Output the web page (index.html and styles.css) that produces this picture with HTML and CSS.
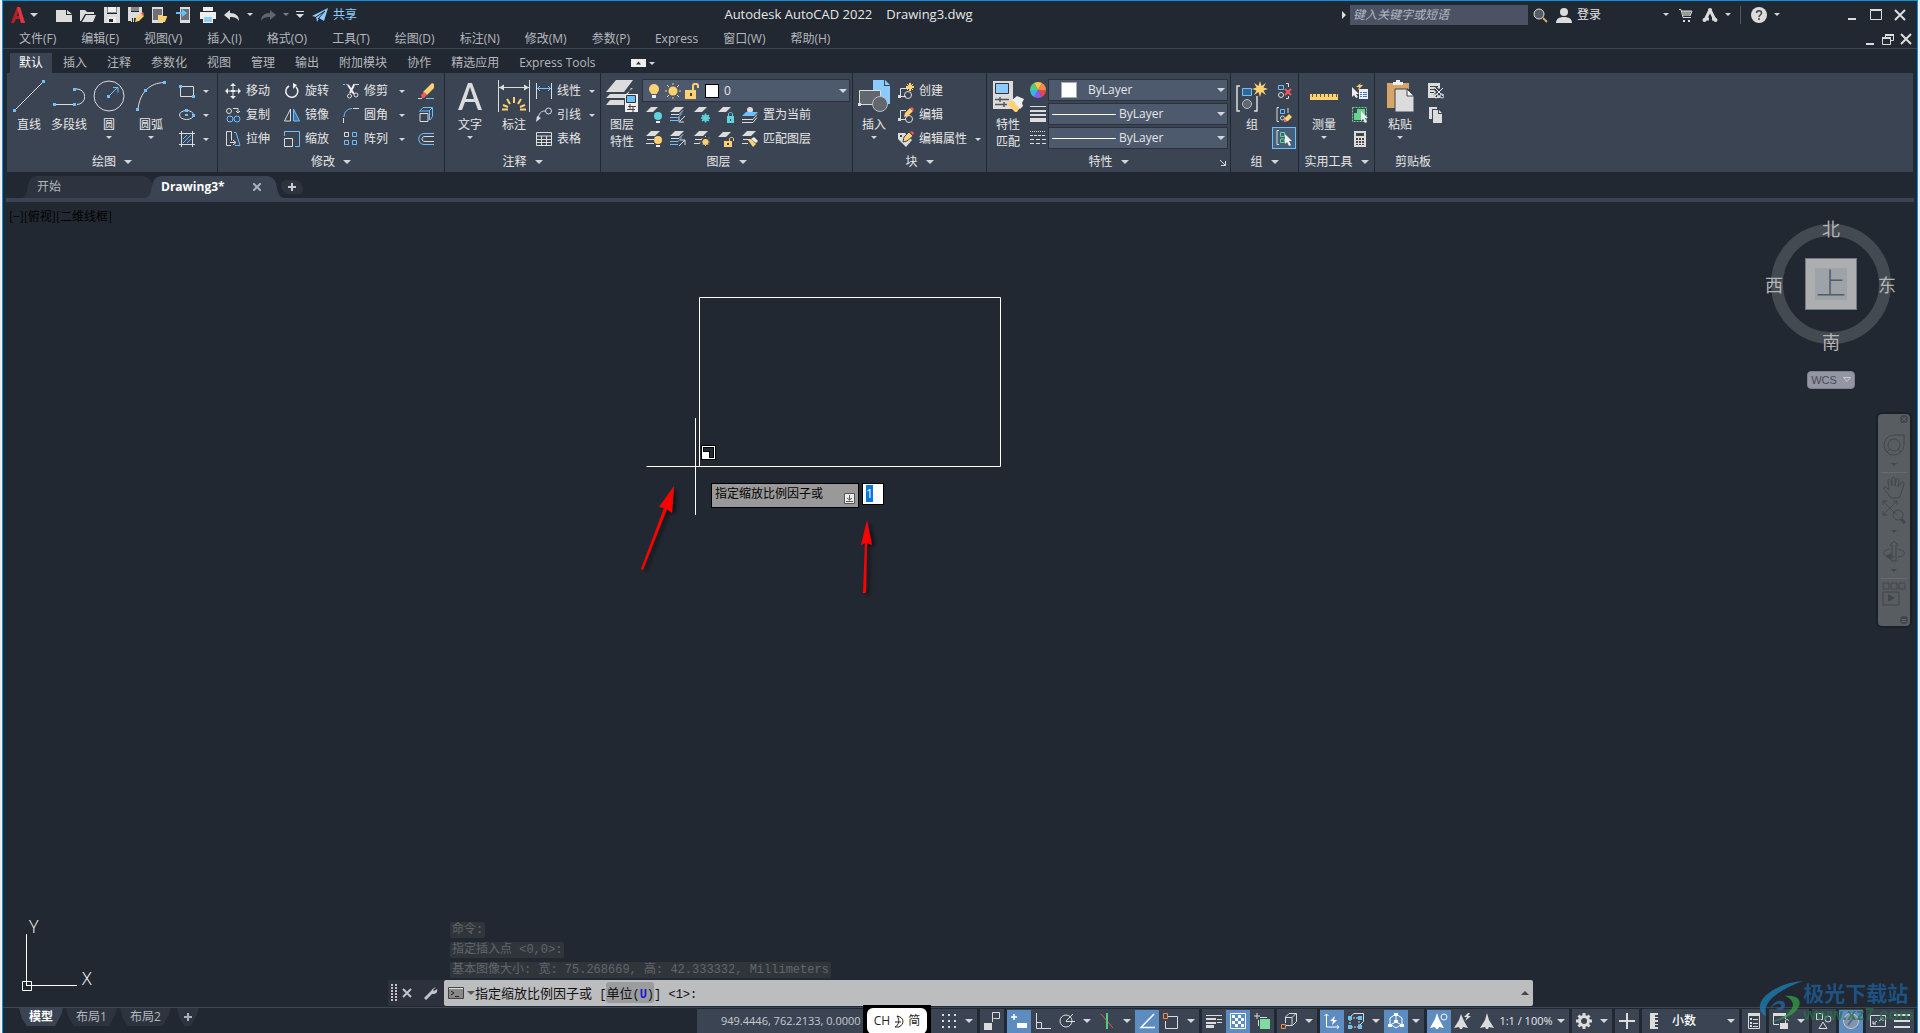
FILE: index.html
```html
<!DOCTYPE html>
<html lang="zh-CN">
<head>
<meta charset="utf-8">
<title>Autodesk AutoCAD 2022 - Drawing3.dwg</title>
<link rel="stylesheet" href="styles.css">
</head>
<body>
<div class="app">

<header class="titlebar">
  <div class="quick">
    <button class="cell" aria-label="应用程序菜单"><svg width="16" height="18" viewBox="0 0 16 18"><path d="M1 17 7 1h3l5 16h-4l-1-4H6l-2 4z" fill="#b3202a"/><path d="M7 1h3l5 16h-4L8 5z" fill="#e0363d"/><path d="M7 10h2l-1-4z" fill="#222831"/></svg></button>
    <i class="caret mid"></i>
    <span class="gap"></span>
    <button class="cell" aria-label="新建"><svg width="16" height="16"><path class="f" d="M0 3h10v5h6v7H0zM11 3l5 4h-5z"/></svg></button>
    <button class="cell" aria-label="打开"><svg width="16" height="16"><path class="f" d="M0 3h5l2 2h7v2H5L1 14H0zM6 8h10l-3 7H2z"/></svg></button>
    <button class="cell" aria-label="保存"><svg width="16" height="16"><path class="f" d="M0 0h3v7h10V0h3v16H0z"/><path fill="#888" d="M3 0h10v6H3z"/><path fill="#eee" d="M4 0h8v5H4zM4 10h8v6H4z"/><path fill="#222831" d="M5 12h4v3H5z"/></svg></button>
    <button class="cell" aria-label="另存为"><svg width="16" height="16"><path class="f" d="M0 0h3v5h8V0h3v7l-4 4H3v3H0z"/><path fill="#888" d="M3 0h8v4H3z"/><path class="s" d="M3.500 15v-4M5.500 15v-4"/><path d="m7 15 1-4 5-5 3 3-5 5z" fill="#ffd173"/><path d="m13 6 2-1 1 2-1 2z" fill="#f0565b"/></svg></button>
    <button class="cell" aria-label="从 Web 和 Mobile 打开"><svg width="16" height="16"><path fill="#dcdcdc" d="M0 0h11v16H0z"/><path fill="#6b6f76" d="M1 2h9v11H1z"/><path fill="#ffd173" d="M6 8h4l1 1h4v1l-2 5H6z"/></svg></button>
    <button class="cell" aria-label="保存到 Web 和 Mobile"><svg width="16" height="16"><path fill="#dcdcdc" d="M4 0h10v16H4z"/><path fill="#6b6f76" d="M5 2h8v11H5z"/><path fill="#6cc0ff" d="M0 5h6V2l5 4-5 4V7H0z"/></svg></button>
    <button class="cell" aria-label="打印"><svg width="16" height="16"><path fill="#eee" d="M3 0h10v4H3zM0 5h16v7h-3V9H3v3H0z"/><path fill="#eee" d="M3 9h10v7H3z"/><path fill="#8ccbff" d="M4 10h8v5H4z"/></svg></button>
    <button class="cell" aria-label="放弃"><svg width="16" height="16"><path class="f" d="M0 8l6-5v3c6 0 9 3 9 8-2-3-4-4-9-4v3z"/></svg></button>
    <i class="caret slot"></i>
    <button class="cell" aria-label="重做"><svg width="16" height="16"><path fill="#60656d" d="M16 8l-6-5v3c-6 0-9 3-9 8 2-3 4-4 9-4v3z"/></svg></button>
    <i class="caret slot dim"></i>
    <button class="cell thin" aria-label="自定义快速访问工具栏"><svg width="10" height="8"><path class="f" d="M1 0h8v1H1zM1 3h8L5 7z"/></svg></button>
    <button class="share"><svg width="16" height="14"><path fill="#8ccbff" d="M0 8 16 0l-4 13-5-3-2 4-1-5z"/><path stroke="#222831" fill="none" d="M4 9l9-6-7 8"/></svg>共享</button>
  </div>
  <h1 class="title"><span>Autodesk AutoCAD 2022</span><span>Drawing3.dwg</span></h1>
  <div class="account">
    <svg width="10" height="8"><path class="f" d="M2 0l4 4-4 4z"/></svg>
    <input class="search" type="text" placeholder="键入关键字或短语" aria-label="搜索">
    <button class="cell" aria-label="搜索"><svg width="16" height="16"><circle cx="7" cy="7" r="5" fill="#555c66" stroke="#dcdcdc"/><path d="m11 11 4 4" stroke="#d8a468" stroke-width="2"/></svg></button>
    <button class="login"><svg width="16" height="16"><circle class="f" cx="8" cy="5" r="4"/><path class="f" d="M0 16c0-4 3-6 8-6s8 2 8 6z"/></svg>登录<i class="caret"></i></button>
    <button class="cell" aria-label="商店"><svg width="14" height="14"><path fill="#999" d="M3 3h9l-1 5H4z"/><path class="s" d="M0 1.500h2l2 8h8M3 3h10l-2 5"/><path class="f" d="M4 12h2v2H4zM9 12h2v2H9z"/></svg></button>
    <button class="cell" aria-label="Autodesk App Store"><svg width="16" height="16"><path d="M8 3 3 13M8 3l5 10M3 12h4M10 12h4" stroke="#dcdcdc" stroke-width="3" fill="none"/><circle class="f" cx="8" cy="3" r="2"/><circle class="f" cx="2.500" cy="13" r="2"/><circle class="f" cx="13.500" cy="13" r="2"/></svg></button>
    <i class="caret slot"></i>
    <span class="vline"></span>
    <button class="cell" aria-label="帮助"><svg width="16" height="16"><circle class="f" cx="8" cy="8" r="8"/><path d="M5.500 6C5.500 3 10.500 3 10.500 6c0 2-2.500 2-2.500 4M8 11v2" stroke="#444" stroke-width="1.500" fill="none"/></svg></button>
    <i class="caret slot"></i>
    <div class="winbtns">
      <button class="cell" aria-label="最小化"><svg width="12" height="12"><path class="f" d="M2 9h8v2H2z"/></svg></button>
      <button class="cell" aria-label="最大化"><svg width="12" height="12"><path class="s" d="M.5 1.500h11v9H.5zM0 .5h12"/></svg></button>
      <button class="cell" aria-label="关闭"><svg width="12" height="12"><path d="m1 1 10 10M11 1 1 11" stroke="#dcdcdc" stroke-width="2"/></svg></button>
    </div>
  </div>
</header>

<nav class="menubar">
  <button>文件(F)</button><button>编辑(E)</button><button>视图(V)</button><button>插入(I)</button><button>格式(O)</button><button>工具(T)</button><button>绘图(D)</button><button>标注(N)</button><button>修改(M)</button><button>参数(P)</button><button>Express</button><button>窗口(W)</button><button>帮助(H)</button>
  <div class="docbtns">
    <button aria-label="最小化图形"><svg width="12" height="12"><path class="f" d="M2 10h8v2H2z"/></svg></button>
    <button aria-label="还原图形"><svg width="12" height="12"><path class="s" d="M3.500 4V1.500h8v6H9M.5 5h8v6.500h-8z"/><path class="f" d="M3 1h9v2H3zM0 4h9v2H0z"/></svg></button>
    <button aria-label="关闭图形"><svg width="12" height="12"><path d="m1 1 10 10M11 1 1 11" stroke="#dcdcdc" stroke-width="2"/></svg></button>
  </div>
</nav>

<nav class="tabs">
  <button class="on">默认</button><button>插入</button><button>注释</button><button>参数化</button><button>视图</button><button>管理</button><button>输出</button><button>附加模块</button><button>协作</button><button>精选应用</button><button>Express Tools</button>
  <button class="minribbon" aria-label="最小化功能区"><svg width="15" height="8"><path fill="#eee" d="M0 0h15v8H0z"/><path fill="#333" d="M5 5.500h5L7.500 2.500z"/></svg><i class="caret"></i></button>
</nav>

<section class="ribbon">
  <div class="panel p-draw">
    <div class="body">
      <button class="big"><svg width="32" height="32"><path class="s" d="M1 31 31 1"/><path class="bf" d="M0 29h3v3H0zM29 0h3v3h-3z"/></svg><span>直线</span></button>
      <button class="big"><svg width="32" height="32"><path class="s" d="M1 24.500h20M23 9h1a7.500 7.500 0 0 1 0 15.500"/><path class="bf" d="M0 23h3v3H0zM20 23h3v3h-3zM20 8h3v3h-3z"/></svg><span>多段线</span></button>
      <button class="big"><svg width="32" height="32"><circle class="s" cx="16" cy="16" r="15"/><path class="b" d="m16 16 8-8M20 7.500h5v5"/><path class="bf" d="M14 15h3v3h-3z"/></svg><span>圆</span><i class="caret"></i></button>
      <button class="big w44"><svg width="32" height="32"><path class="s" d="M3 29C5 12 15 3 29 2.500"/><path class="bf" d="M1 28h3v3H1zM9 9h3v3H9zM28 1h3v3h-3z"/></svg><span>圆弧</span><i class="caret"></i></button>
      <div class="col">
        <button class="small" aria-label="矩形"><svg width="16" height="16"><path class="s" d="M1.500 3.500h13v10h-13z"/><path class="bf" d="M0 2h3v3H0zM13 12h3v3h-3z"/></svg><i class="caret"></i></button>
        <button class="small" aria-label="椭圆"><svg width="16" height="16"><ellipse class="s" cx="7.500" cy="8" rx="7" ry="4.500"/><path class="bf" d="M6 2h3v3H6zM6 7h3v2H6zM13 7h3v3h-3z"/></svg><i class="caret"></i></button>
        <button class="small" aria-label="图案填充"><svg width="16" height="16"><path class="s" d="M2.500 0v16M13.500 0v16M0 2.500h16M0 13.500h16"/><path class="b" d="m4 8 4-4M4 12l8-8M8 12l4-4"/></svg><i class="caret"></i></button>
      </div>
    </div>
    <button class="name">绘图<i class="caret lg"></i></button>
  </div>

  <div class="panel p-modify">
    <div class="body">
      <div class="col">
        <button class="small"><svg width="16" height="16"><path stroke="#eee" stroke-width="1" fill="none" d="M8 2v12M2 8h12"/><path fill="#eee" d="m8 0 3 3H5zM8 16l3-3H5zM0 8l3-3v6zM16 8l-3-3v6zM6 7h4v2H6z"/></svg>移动</button>
        <button class="small"><svg width="16" height="16"><circle class="s" cx="4" cy="4" r="2.500"/><path class="s" d="M8 1.500h5V6M11 4l2 2 2-2"/><circle class="b" cx="5" cy="12" r="3"/><circle class="b" cx="12" cy="12" r="3"/></svg>复制</button>
        <button class="small"><svg width="16" height="16"><path class="s" d="M6 14.500H1.500V.5h5v9M5 11.500h5M8 9l3 2.500L8 14"/><path class="b" d="M9 1.500h2l4 13h-5"/></svg>拉伸</button>
      </div>
      <div class="col">
        <button class="small"><svg width="16" height="16"><path d="M5 3a6 6 0 1 0 7 1" fill="none" stroke="#eee" stroke-width="1.500"/><path fill="#eee" d="m9 0 4 2-4 4z"/></svg>旋转</button>
        <button class="small"><svg width="16" height="16"><path class="s" d="M6.500 2v12H.5z"/><path d="M9.500 2v12h6z" stroke="#6cc0ff" fill="#3b79a8"/></svg>镜像</button>
        <button class="small"><svg width="16" height="16"><path class="b" d="M.5 5V.5h15v15H11"/><path class="s" d="M.5 7.500h8v8h-8z"/></svg>缩放</button>
      </div>
      <div class="col wide">
        <button class="small"><svg width="16" height="16"><path class="b" stroke-dasharray="2 1" d="M0 1.500h5"/><path class="s" d="M10 1.500h6"/><path stroke="#eee" stroke-width="2" d="m5 2 6 9M11 2 7 10"/><circle class="s" cx="6.500" cy="13" r="2"/><circle class="s" cx="13" cy="12" r="2"/></svg>修剪<i class="caret"></i></button>
        <button class="small"><svg width="16" height="16"><path class="b" d="M1 10c0-5 3-8 8-8.500"/><path class="s" d="M.5 11v5M10 1.500h6"/></svg>圆角<i class="caret"></i></button>
        <button class="small"><svg width="16" height="16"><path class="s" d="M1.500 1.500h4v4h-4z"/><path class="b" d="M9.500 1.500h4v4h-4zM1.500 9.500h4v4h-4zM9.500 9.500h4v4h-4z"/></svg>阵列<i class="caret"></i></button>
      </div>
      <div class="col last">
        <button class="small" aria-label="删除"><svg width="16" height="16"><path d="m5 9 9-9 2 1v4l-7 7z" fill="#ffd173"/><path d="m3 12 3-3 3 3-3 3H4z" fill="#f0565b"/><path class="s" d="M0 15.500h4"/><path class="b" d="M8 15.500h8"/></svg></button>
        <button class="small" aria-label="分解"><svg width="16" height="16"><path class="s" d="M2 6.500h8v8H2z"/><path class="b" d="M1.500 4.500 5 .5h9.500v9L12 13M1.500 4h9.500l3.500-3.500M11.500 4v9"/></svg></button>
        <button class="small" aria-label="偏移"><svg width="16" height="16"><path class="b" d="M16 2.500H6c-7 0-7 11 0 11h10"/><path class="s" d="M16 5.500H7c-4 0-4 5 0 5h9"/></svg></button>
      </div>
    </div>
    <button class="name">修改<i class="caret lg"></i></button>
  </div>

  <div class="panel p-anno">
    <div class="body">
      <button class="big w48"><svg width="32" height="32"><path class="f" fill-rule="evenodd" d="M4 30 14 3h4l10 27h-4l-3-8H11l-3 8zM12 19h8L16 7z"/></svg><span>文字</span><i class="caret"></i></button>
      <button class="big"><svg width="32" height="32"><path class="s" d="M.5 0v32M31.500 0v32M1 7.500h30"/><path class="f" d="m1 7.500 5-3v6zM31 7.500l-5-3v6z"/><path d="M16 17v6M9 19l3 5M23 19l-3 5M5 25l5 2M27 25l-5 2M4 29.500h6M22 29.500h6" stroke="#ffd173" stroke-width="2"/></svg><span>标注</span></button>
      <div class="col tight">
        <button class="small"><svg width="16" height="16"><path class="s" d="M.5 0v16M15.500 0v16"/><path class="b" d="M1 5.500h14M4 3 1.500 5.500 4 8M12 3l2.500 2.500L12 8"/></svg>线性<i class="caret"></i></button>
        <button class="small"><svg width="16" height="16"><path class="s" d="M2 12C3 6 5 4 9 4"/><circle class="s" cx="12.500" cy="4" r="3"/><path class="f" d="m0 15 1-6 4 2z"/></svg>引线<i class="caret"></i></button>
        <button class="small"><svg width="16" height="16"><path class="s" d="M.5 1.500h15v13H.5zM0 5h16M1 8.500h15M1 11.500h15M5.500 5v10M10.500 5v10"/></svg>表格</button>
      </div>
    </div>
    <button class="name">注释<i class="caret lg"></i></button>
  </div>

  <div class="panel p-layer">
    <div class="body">
      <button class="big"><svg width="32" height="32"><path class="f" d="M0 12 10 0h17l-9 12zM0 18l4-4h16l7-6h-2l-5 10zM0 25l4-5h14v5z"/><path fill="#eee" d="M19 14h13v18H19z"/><path fill="#6cc0ff" stroke="#333" d="M20.500 15.500h9v7h-9z"/><path stroke="#444" d="M22 26.500h8M21 29.500h8M24 24v5M27 27v5"/></svg><span>图层<br>特性</span></button>
      <div class="stack">
        <div class="combo"><svg width="16" height="16"><circle cx="8" cy="6" r="5" fill="#ffd173"/><path fill="#ffd173" d="M5 9h6v2H5z"/><path fill="#eee" d="M6 12h4v3H6z"/></svg><svg width="16" height="16"><circle cx="8" cy="8" r="4.500" fill="#ffd173"/><path stroke="#ffd173" d="M8 0v2M8 14v2M0 8h2M14 8h2M2 2l2 2M12 12l2 2M14 2l-2 2M4 12l-2 2"/></svg><svg width="16" height="16"><path fill="#ffd173" d="M1 7h11v9H1z"/><path d="M9 7V3c0-3 5-3 5 0v2" fill="none" stroke="#ffd173" stroke-width="2"/><path fill="#444" d="M6 10h2v3H6z"/></svg><b class="swatch black"></b><select aria-label="图层"><option>0</option></select><i class="caret lg"></i></div>
        <div class="row">
          <button class="cell" aria-label="关"><svg width="16" height="16"><path class="f" d="m0 5 5-5h7L7 5z"/><circle cx="12" cy="9" r="4" fill="#60d4de"/><path fill="#eee" d="M10 14h4v2h-4z"/></svg></button>
          <button class="cell" aria-label="隔离"><svg width="16" height="16"><path class="f" d="m0 5 5-5h9L9 5z"/><path class="s" d="M1 7.500h8l4-4"/><path class="b" d="M0 10.500h8l4-4M0 13.500h8"/><path class="s" d="m15 9-5 5M9 10v5h5"/></svg></button>
          <button class="cell" aria-label="冻结"><svg width="16" height="16"><path class="f" d="m0 5 5-5h8L8 5z"/><path stroke="#60d4de" stroke-width="1.500" d="M11.500 6.500v9M7 11h9M8 8l7 6M15 8l-7 6"/><circle cx="11.500" cy="11" r="3" fill="none" stroke="#60d4de"/></svg></button>
          <button class="cell" aria-label="锁定"><svg width="16" height="16"><path class="f" d="m0 5 5-5h8L8 5z"/><path fill="#60d4de" d="M9 9h7v7H9z"/><path d="M10.500 9V7c0-2 4-2 4 0v2" fill="none" stroke="#60d4de"/><path fill="#333" d="M12 12h1v2h-1z"/></svg></button>
          <button class="small flush"><svg width="16" height="16"><circle class="f" cx="8" cy="3" r="3"/><path fill="#6cc0ff" d="m0 9 4-4h12l-4 4z"/><path class="s" d="M0 12.500h11l4-5M0 15.500h11l4-5"/></svg>置为当前</button>
        </div>
        <div class="row">
          <button class="cell" aria-label="全部打开"><svg width="16" height="16"><path class="f" d="m0 5 5-5h9L9 5z"/><path class="s" d="M1 8.500h7M0 12.500h8"/><circle cx="12" cy="9" r="4" fill="#ffd173"/><path fill="#eee" d="M10 14h4v2h-4z"/></svg></button>
          <button class="cell" aria-label="取消隔离"><svg width="16" height="16"><path class="f" d="m0 5 5-5h9L9 5z"/><path class="s" d="M1 7.500h8l4-4"/><path class="b" d="M0 10.500h8l4-4M0 13.500h8"/><path class="s" d="m9 15 6-6M10 9h5v5"/></svg></button>
          <button class="cell" aria-label="解冻"><svg width="16" height="16"><path class="f" d="m0 5 5-5h9L9 5z"/><path class="s" d="M1 8.500h7M0 12.500h6"/><circle cx="11.500" cy="11" r="3" fill="#ffd173"/><path stroke="#ffd173" stroke-dasharray="1 2" d="M11.500 5v12M5.500 11h12M7.500 7l8 8M15.500 7l-8 8"/></svg></button>
          <button class="cell" aria-label="解锁"><svg width="16" height="16"><path class="f" d="m0 6 5-5h8L8 6z"/><path fill="#ffd173" d="M6 10h8v6H6z"/><path d="M11.500 10V8c0-2 4-2 4 0v2" fill="none" stroke="#ffd173"/><path fill="#444" d="M9 12h2v2H9z"/></svg></button>
          <button class="small flush"><svg width="16" height="16"><path class="f" d="m0 5 5-5h9L9 5z"/><path class="s" d="M1 8.500h7M0 12.500h6"/><path fill="#ffd173" d="m6 9 3-1 5 5-3 3z"/><path fill="#eee" d="m9 8 3-2 4 4-2 2z"/></svg>匹配图层</button>
        </div>
      </div>
    </div>
    <button class="name">图层<i class="caret lg"></i></button>
  </div>

  <div class="panel p-block">
    <div class="body">
      <button class="big"><svg width="32" height="32"><path fill="#8ccbff" d="M15 0h11v6h6v18H15z"/><path fill="#8ccbff" d="m27 0 5 5h-5z"/><path d="M1.500 10.500h21v14h-21z" fill="#62666e" stroke="#dcdcdc"/><circle cx="22" cy="24" r="7.500" fill="#62666e" stroke="#b9bcc0"/><path class="f" d="M0 23h3v3H0z"/></svg><span>插入</span><i class="caret"></i></button>
      <div class="col pad4">
        <button class="small"><svg width="16" height="16"><path class="s" d="M10 5.500H2.500v8H8"/><circle class="s" cx="10" cy="12" r="3.500"/><path class="f" d="M0 12h3v3H0z"/><path stroke="#ffd173" stroke-width="2" d="M12 0v8M8 4h8"/><path stroke="#ffd173" d="M9 1l6 6M15 1 9 7"/></svg>创建</button>
        <button class="small"><svg width="16" height="16"><path class="s" d="M8 3.500H2.500v9H8"/><circle class="s" cx="11" cy="12" r="3.500"/><path class="f" d="M0 11h3v3H0z"/><path d="m6 10 1-4 5-5 3 3-5 5z" fill="#ffd173"/><path d="m12 1 2-1 2 2-1 2z" fill="#f0565b"/></svg>编辑</button>
        <button class="small"><svg width="16" height="16"><path class="f" d="M0 2h7l7 7-6 7-8-8z"/><path fill="#3b4453" d="M2 4h2v2H2z"/><path d="m5 11 1-5 5-5 4 4-6 5z" fill="#ffd173" stroke="#3b4453"/><path d="m12 1 2-1 2 2-1 2z" fill="#f0565b"/></svg>编辑属性<i class="caret"></i></button>
      </div>
    </div>
    <button class="name">块<i class="caret lg"></i></button>
  </div>

  <div class="panel p-prop">
    <div class="body">
      <button class="big"><svg width="32" height="32"><path class="f" d="M1 1h20v28H1z"/><path fill="#8ccbff" stroke="#333" stroke-width="1" d="M3.500 3.500h13v10h-13z"/><path stroke="#555" d="M3 19.500h14M3 24.500h12M8 17v5M12 22v5" stroke-width="1.500"/><path fill="#ffd173" d="m15 24 5-4 8 8-4 5z"/><path fill="#eee" d="m20 20 5-4 7 3-2 4 1 3-3 3z"/></svg><span>特性<br>匹配</span></button>
      <div class="stack">
        <div class="row"><svg class="pico wheel" width="16" height="16" viewBox="-8 -8 16 16"><path fill="#ffc24a" d="M0 0-7-12H7z"/><path fill="#f58b4c" d="M0 0 7-12 14 0z"/><path fill="#e5484d" d="M0 0h14L7 12z"/><path fill="#8a5cf0" d="M0 0 7 12H-7z"/><path fill="#3fb2e8" d="M0 0-7 12-14 0z"/><path fill="#4fce7e" d="M0 0h-14L-7-12z"/></svg>
          <div class="combo"><b class="swatch white"></b><select class="c1" aria-label="对象颜色"><option>ByLayer</option></select><i class="caret lg"></i></div></div>
        <div class="row"><svg class="pico" width="16" height="16"><path class="f" d="M0 0h16v1H0zM0 4h16v2H0zM0 8h16v2H0zM0 12h16v4H0z"/></svg>
          <div class="combo"><span class="line"></span><select aria-label="线宽"><option>ByLayer</option></select><i class="caret lg"></i></div></div>
        <div class="row"><svg class="pico" width="16" height="16"><path class="s" stroke-dasharray="1 1" d="M0 1.500h16"/><path class="s" stroke-dasharray="3 1" d="M0 5.500h16"/><path class="s" stroke-dasharray="4 2" d="M0 9.500h16M0 13.500h16"/></svg>
          <div class="combo"><span class="line"></span><select aria-label="线型"><option>ByLayer</option></select><i class="caret lg"></i></div></div>
      </div>
    </div>
    <button class="name">特性<i class="caret lg"></i><svg class="launch" width="6" height="6"><path class="s" d="m0 0 5 5M5.500 1v4.500H1"/></svg></button>
  </div>

  <div class="panel p-group">
    <div class="body">
      <button class="big"><svg width="32" height="32"><path class="s" stroke-width="1.500" d="M4 6H1v25h3M18 31h3V16"/><path fill="#34678f" stroke="#6cc0ff" d="M6.500 8.500h9v7h-9z"/><circle cx="11" cy="24" r="4.500" fill="#62666e" stroke="#b9bcc0"/><path fill="#ffd173" d="m24 1 1.500 5L30 3l-2.500 4.500L32 9l-4.500 1.500L30 15l-4.500-3L24 17l-1.500-5L18 15l2.500-4.500L16 9l4.500-1.500L18 3l4.500 3z"/></svg><span>组</span></button>
      <div class="col cells">
        <button class="cell" aria-label="解除编组"><svg width="16" height="16"><path class="b" d="M2.500 2.500h5v4h-5z"/><circle class="s" cx="5" cy="12" r="2.500"/><path class="s" d="M10 .5h2.500V4M10 15.500h2.500V13"/><path stroke="#f0565b" stroke-width="2" d="m9 6 6 6M15 6l-6 6"/></svg></button>
        <button class="cell" aria-label="组编辑"><svg width="16" height="16"><path class="s" d="M3 .5H1v14h2M12 1v5"/><path class="b" d="M4.500 2.500h4v4h-4z"/><circle class="s" cx="6.500" cy="11" r="2"/><path d="m8 15 1-4 4-4 3 3-4 4z" fill="#ffd173"/><path fill="#f0565b" d="m8 15 1-3 2 2z"/></svg></button>
        <button class="cell boxed" aria-label="组选择"><svg width="16" height="16"><path class="s" d="M3 .5H1v14h2"/><path stroke="#68d391" fill="none" d="M4.500 2.500h4v4h-4zM4.500 9h4v3.500h-4z"/><path fill="#eee" d="M9 4v10l2-2 2 4 2-1-2-4h3z"/></svg></button>
      </div>
    </div>
    <button class="name">组<i class="caret lg"></i></button>
  </div>

  <div class="panel p-util">
    <div class="body">
      <button class="big w48"><svg width="32" height="32"><path fill="#ffd173" d="M2 14h28v6H2z"/><path stroke="#6a5a38" stroke-dasharray="1 3" stroke-width="3" d="M4 15.500h26"/></svg><span>测量</span><i class="caret"></i></button>
      <div class="col cells">
        <button class="cell" aria-label="快速选择"><svg width="16" height="16"><path fill="#eee" d="M0 4v10l2-2 2 3 2-1-2-3h3zM7 6h9v10H7z"/><path fill="#ffd173" d="M9 0 4 4h3l-1 3 5-5H8z"/><path stroke="#3b79c8" d="M8 9.500h2M11 9.500h4M8 11.500h2M11 11.500h4M8 13.500h2M11 13.500h4"/></svg></button>
        <button class="cell" aria-label="全部选择"><svg width="16" height="16"><path stroke="#68d391" stroke-dasharray="2 1" fill="none" d="M.5.5h14v14H.5z"/><path fill="#68d391" d="M5 2h8v8H5zM2 6h8v7H2z"/><path fill="#eee" d="M9 4v10l2-2 2 4 2-1-2-4h3z"/></svg></button>
        <button class="cell" aria-label="快速计算器"><svg width="16" height="16"><path class="f" d="M2 0h12v16H2z"/><path fill="#444" d="M4 2h8v3H4zM4 7h2v2H4zM7 7h2v2H7zM10 7h2v2h-2zM4 10h2v2H4zM7 10h2v2H7zM10 10h2v2h-2zM4 13h2v1H4zM7 13h2v1H7zM10 13h2v1h-2z"/></svg></button>
      </div>
    </div>
    <button class="name">实用工具<i class="caret lg"></i></button>
  </div>

  <div class="panel p-clip">
    <div class="body">
      <button class="big w48"><svg width="32" height="32"><path fill="#d8a468" d="M3 3h22v25H3z"/><path fill="#eee" d="M9 2h3V0h4v2h3v3H9z"/><path class="f" stroke="#3b4453" d="M11 9h13l6 6v17H11z"/><path fill="#f5f5f5" stroke="#3b4453" d="M23 9v7h7z"/></svg><span>粘贴</span><i class="caret"></i></button>
      <div class="col cells">
        <button class="cell" aria-label="剪切"><svg width="16" height="16"><path class="f" d="M0 0h12v15H0z"/><path stroke="#444" d="M2 3.500h8M2 6.500h5M2 9.500h4"/><path stroke="#3b4453" stroke-width="4" d="m7 5 8 8M15 5l-8 8"/><path stroke="#eee" d="m7 5 8 8M15 5l-8 8"/><circle class="s" cx="8" cy="13" r="2"/><circle class="s" cx="14" cy="13" r="2"/></svg></button>
        <button class="cell" aria-label="复制剪裁"><svg width="16" height="16"><path class="f" d="M1 0h8v2H4v10H1zM5 3h5v4h4v9H5zM11 3l3 3h-3z"/></svg></button>
      </div>
    </div>
    <span class="name">剪贴板</span>
  </div>
</section>

<nav class="doctabs">
  <button class="doctab">开始</button>
  <button class="doctab on"><span>Drawing3*</span><svg width="8" height="8"><path d="m0 0 8 8M8 0 0 8" stroke="#aab0b8" stroke-width="2"/></svg></button>
  <button class="newtab" aria-label="新建图形"><svg width="8" height="8"><path d="M4 0v8M0 4h8" stroke="#c8ccd2" stroke-width="2"/></svg></button>
</nav>

<main class="canvas">
  <p class="viewlabel">[−][俯视][二维线框]</p>

  <svg class="drawing" width="1010" height="410">
    <defs><filter id="shade" x="-50%" y="-20%" width="200%" height="140%"><feDropShadow dx="3" dy="2" stdDeviation="2" flood-color="#000" flood-opacity=".6"/></filter></defs>
    <path d="M693.500 95.500h301v169h-354M693.500 95.500v169M689.500 216v97" stroke="#fff" fill="none"/>
    <path d="M695 243h15v15h-15z" fill="#000"/><path d="M696 244h13v13h-13z" fill="#fff"/><path d="M697 245h11v11h-5v-6h-6z" fill="#000"/><path d="M698 246h9v9h-3v-6h-6z" fill="#222831"/>
    <g filter="url(#shade)" fill="#f00"><path d="m668 284-15 21 5 1-23 61 2 1 24-61 5 4zM861 318l-6 25 4-2-2 50h3l1-50 5 2z"/></g>
  </svg>

  <div class="prompt">
    <label class="promptlabel" for="factor">指定缩放比例因子或<svg width="11" height="11"><path fill="#eee" stroke="#555" d="M.5.500h10v10H.5z"/><path stroke="#555" fill="none" d="M5.500 2v5M3 5l2.500 2L8 5M2 8.500h7"/></svg></label>
    <span class="factorbox"><input id="factor" type="text" value="1"></span>
  </div>

  <div class="viewcube">
    <svg width="122" height="122"><circle cx="61" cy="61" r="54" fill="none" stroke="#444a52" stroke-width="12"/></svg>
    <span class="n">北</span><span class="w">西</span><span class="e">东</span><span class="so">南</span>
    <button class="face"><span>上</span></button>
  </div>
  <button class="wcs">WCS<svg width="8" height="6"><path d="M.5.500h7L4 4.500z" fill="none" stroke="#c8cad4"/></svg></button>

  <div class="navbar">
    <button aria-label="关闭导航栏" class="tiny"><svg width="8" height="8"><circle cx="4" cy="4" r="4" fill="#42474d"/><path d="m2 2 4 4M6 2 2 6" stroke="#5e6367"/></svg></button>
    <button aria-label="导航控制盘" class="nv"><svg width="22" height="22"><path class="n1" d="M11 1h10v10A10 10 0 1 1 11 1z"/><circle class="n1" cx="11" cy="11" r="6"/><path class="n1" d="m7 15-3 3M15 15l3 3"/></svg></button><i class="caret"></i><hr>
    <button aria-label="平移" class="nv"><svg width="22" height="22"><path class="n1" d="M8 21C5 17 3 14 1 12c-1-2 1-3 3-1l2 2L5 4c0-2 2-2 3 0l1 5V2c0-2 3-2 3 0v7l1-6c0-2 3-2 3 0l-1 7 3-4c1-2 3-1 3 1-1 4-2 6-3 9l-2 5z"/></svg></button>
    <button aria-label="范围缩放" class="nv"><svg width="24" height="24"><path class="n1" d="m1 1 14 14M15 1 1 15M1 5V1h4M11 1h4v4M1 11v4h4"/><circle class="n1" cx="16" cy="15" r="5" fill="#585d61"/><path d="m19 19 4 4" stroke="#42474d" stroke-width="3"/></svg></button><i class="caret"></i>
    <button aria-label="动态观察" class="nv"><svg width="22" height="22"><path class="n1" d="M9 21V5H7l4-4 4 4h-2v16z"/><path class="n1" d="M7 9C-2 11-2 15 6 16l5 1M15 9c9 2 8 7 0 8"/><path fill="#42474d" d="m3 17 5-4v7z"/></svg></button><i class="caret"></i><hr>
    <button aria-label="ShowMotion" class="nv"><svg width="24" height="24"><path class="n1" d="M1 1h6v6H1zM9 1h6v6H9zM17 1h6v6h-6zM1 10h16v13H1z"/><path fill="#42474d" d="m6 12 7 4-7 4z"/></svg></button>
    <button aria-label="自定义" class="tiny end"><svg width="8" height="8"><circle cx="4" cy="4" r="4" fill="#42474d"/><path d="M2 3.500h4M2 5.500h4" stroke="#5e6367"/></svg></button>
  </div>

  <svg class="ucs" width="90" height="90"><path d="M10.500 28v52M10 79.500h51M6.500 75.500h9v9h-9z" stroke="#fff" fill="none"/><text x="13" y="27">Y</text><text x="66" y="79">X</text></svg>

  <div class="command">
    <ul class="history"><li>命令:</li><li>指定插入点 &lt;0,0&gt;:</li><li>基本图像大小: 宽: 75.268669, 高: 42.333332, Millimeters</li></ul>
    <div class="cmdbar">
      <div class="grip">
        <svg width="6" height="18"><path stroke="#c0c3c8" stroke-width="2" stroke-dasharray="2 1" d="M1 0v18M5 0v18"/></svg>
        <button aria-label="关闭命令行"><svg width="10" height="10"><path d="m1 1 8 8M9 1 1 9" stroke="#c0c3c8" stroke-width="2"/></svg></button>
        <button aria-label="自定义命令行"><svg width="14" height="14"><path d="m1 13 7-7" stroke="#c0c3c8" stroke-width="3"/><path d="M12 1 9 4l1 1 3-2c1 3-1 5-4 5S6 3 12 1z" fill="#c0c3c8"/></svg></button>
      </div>
      <div class="cmdline">
        <svg width="16" height="12"><path fill="#888" stroke="#444" d="M.5.500h15v11H.5z"/><path fill="#ddd" d="M1 1h14v1H1z"/><path stroke="#222" fill="none" d="m3 4 3 2-3 2M7 9.500h4"/></svg><i class="caret lg dark"></i>
        <p>指定缩放比例因子或<code> [</code><mark>单位<code>(<b>U</b>)</code></mark><code>] &lt;1&gt;:</code></p>
        <button aria-label="展开历史记录"><svg width="8" height="4"><path fill="#444" d="M0 4h8L4 0z"/></svg></button>
      </div>
    </div>
  </div>
</main>

<footer class="bottom">
  <nav class="layouts">
    <button class="on">模型</button><button>布局1</button><button>布局2</button><button class="add" aria-label="新建布局"><svg width="8" height="8"><path d="M4 0v8M0 4h8" stroke="#aab0b8" stroke-width="2"/></svg></button>
  </nav>
  <div class="status">
    <div class="grp"><div class="coords"><span>949.4446, 762.2133, 0.0000</span><div class="ime"><span>CH <svg width="10" height="13"><path d="M3 1c7 1 8 8 2 11H1c4-2 5-7 2-11zM1 7h6" fill="none" stroke="#222"/></svg> 简</span></div></div>
      <button class="st" aria-label="栅格"><svg width="14" height="14"><path stroke="#dcdcdc" stroke-width="2" stroke-dasharray="2 4" d="M0 1h14M0 7h14M0 13h14"/></svg></button><button class="dd" aria-label="捕捉设置"><i class="caret lg"></i></button></div>
    <div class="grp"><button class="st" aria-label="推断约束"><svg width="16" height="18"><path class="s" d="M8.500 10V.5h7v6h-6"/><path class="f" d="M0 11h8v7H0z"/></svg></button></div>
    <div class="grp">
      <button class="st on" aria-label="动态输入"><svg width="16" height="16"><path stroke="#fff" stroke-width="1.500" d="M3 1v6M0 4h6"/><path fill="#fff" d="M6 10h10v5H6z"/></svg></button>
      <button class="st" aria-label="正交"><svg width="16" height="16"><path class="s" d="M1.500 0v15.500H16M1.500 9.500h5v6"/></svg></button>
      <button class="st" aria-label="极轴追踪"><svg width="16" height="16"><circle class="s" cx="7" cy="8" r="6"/><path class="s" d="m7 8 7-7M7 8.500h9"/></svg></button><button class="dd" aria-label="极轴设置"><i class="caret lg"></i></button>
      <button class="st" aria-label="等轴测草图"><svg width="16" height="16"><path stroke="#f0565b" d="m2 1 12 14"/><path stroke="#4fce7e" stroke-width="2" d="M8 0v16"/></svg></button><button class="dd" aria-label="等轴测设置"><i class="caret lg"></i></button>
      <button class="st on" aria-label="对象捕捉追踪"><svg width="16" height="16"><path stroke="#fff" fill="none" stroke-width="1.500" d="M15 1 2 14.500h14"/></svg></button>
      <button class="st" aria-label="对象捕捉"><svg width="16" height="16"><path class="s" d="M5 3.500h9.500v12h-12V8"/><path stroke="#f58b4c" fill="none" d="M.5.500h4v5h-4z"/></svg></button><button class="dd" aria-label="捕捉选项"><i class="caret lg"></i></button></div>
    <div class="grp">
      <button class="st" aria-label="线宽"><svg width="16" height="14"><path class="f" d="M0 1h16v1H0zM0 4h10v2H0zM11 5h5v1h-5zM0 8h10v2H0zM11 8h5v1h-5zM0 11h8v3H0z"/></svg></button>
      <button class="st on" aria-label="透明度"><svg width="16" height="16"><path stroke="#fff" fill="none" d="M.5.500h15v15H.5z"/><path fill="#fff" d="M2 2h3v3H2zM8 2h3v3H8zM5 5h3v3H5zM11 5h3v3h-3zM2 8h3v3H2zM8 8h3v3H8zM5 11h3v3H5zM11 11h3v3h-3z"/></svg></button>
      <button class="st" aria-label="选择循环"><svg width="16" height="16"><path class="s" d="M3 0v6M0 3h6M6 4.500h7M4.500 7v6"/><path fill="#7fdca0" d="M6 6h10v10H6z"/></svg></button></div>
    <div class="grp"><button class="st" aria-label="三维对象捕捉"><svg width="16" height="16"><path class="s" d="M4 4.500h7v8H5M4.500 4 8 .5h7.500v8l-4 4M11 4.500l4-4M4.500 4v6"/><path stroke="#f58b4c" fill="none" d="M.5 11.500h4v4h-4z"/></svg></button><button class="dd" aria-label="三维捕捉选项"><i class="caret lg"></i></button></div>
    <div class="grp">
      <button class="st on" aria-label="动态 UCS"><svg width="16" height="16"><path stroke="#fff" fill="none" d="M2.500 1v13H15M.5 3l2-2 2 2M13 12l2 2-2 2"/><path fill="#fff" d="M11 3 6 8h3l-1 4 5-5h-3z"/></svg></button>
      <button class="st" aria-label="选择过滤"><svg width="16" height="16"><path class="s" stroke-dasharray="2 1" d="M2 5h9v9H2z"/><path class="s" d="m2 4 4-3.500h9.500v8L12 12"/><path class="bf" d="M0 3h4v4H0zM10 3h4v4h-4zM0 12h4v4H0zM10 12h4v4h-4z"/></svg></button><button class="dd" aria-label="过滤选项"><i class="caret lg"></i></button>
      <button class="st on" aria-label="小控件"><svg width="16" height="16"><path stroke="#fff" fill="none" d="m8 1 6 4v6l-6 4-6-4V5zM8 1v8M8 9l6 3M8 9l-6 3"/><path fill="#fff" d="M6 0h4v3H6zM0 11h4v3H0zM12 11h4v3h-4zM6 7h4v3H6z"/></svg></button><button class="dd" aria-label="小控件选项"><i class="caret lg"></i></button></div>
    <div class="grp">
      <button class="st on" aria-label="注释可见性"><svg width="18" height="16"><path fill="#fff" d="M7 0 5 6l-5 9 5-1 1 2h2l1-2 5 1-5-9z"/><circle cx="14" cy="4" r="3" fill="none" stroke="#fff"/></svg></button>
      <button class="st" aria-label="自动缩放"><svg width="18" height="16"><path class="f" d="M7 1 5 7l-5 8 5-1 1 2h2l1-2 5 1-4-7zM14 0l-4 4h3l-2 4 6-5h-3l2-3z"/></svg></button>
      <button class="st" aria-label="注释比例图标"><svg width="14" height="16"><path class="f" d="M7 0 5 7l-5 8 5-1 1 2h2l1-2 5 1-5-8z"/></svg></button>
      <button class="scale">1:1 / 100%</button><button class="dd" aria-label="注释比例"><i class="caret lg"></i></button></div>
    <div class="grp"><button class="st" aria-label="切换工作空间"><svg width="16" height="16"><circle cx="8" cy="8" r="4.500" fill="none" stroke="#dcdcdc" stroke-width="3"/><path stroke="#dcdcdc" stroke-width="3" d="M8 0v3M8 13v3M0 8h3M13 8h3M2.500 2.500l2 2M11.500 11.500l2 2M13.500 2.500l-2 2M4.500 11.500l-2 2"/></svg></button><button class="dd" aria-label="工作空间选项"><i class="caret lg"></i></button></div>
    <div class="grp"><button class="st" aria-label="注释监视器"><svg width="16" height="16"><path stroke="#dcdcdc" stroke-width="2" d="M8 0v16M0 8h16"/></svg></button></div>
    <div class="grp units"><svg width="24" height="16"><path class="f" d="M8 0h8v2h-3v2h3v1h-3v2h3v2h-3v2h3v1h-3v2h3v2H8z"/></svg><select aria-label="单位"><option>小数</option></select><i class="caret lg"></i></div>
    <div class="grp"><button class="st" aria-label="快捷特性"><svg width="12" height="16"><path class="s" d="M.5.500h11v15H.5z"/><path class="f" d="M0 0h12v3H0zM2 5h2v2H2zM5 6h5v1H5zM2 9h2v2H2zM5 10h5v1H5zM2 12h2v2H2zM5 13h5v1H5z"/></svg></button></div>
    <div class="grp"><button class="st" aria-label="锁定用户界面"><svg width="16" height="16"><path class="s" d="M6 11.500H.5V.5h12V6"/><path class="f" d="M0 0h13v3H0zM7 10h8v6H7z"/><path class="s" d="M12.500 10V8c0-2 3-2 3 0"/></svg></button><button class="dd" aria-label="锁定选项"><i class="caret lg"></i></button></div>
    <div class="grp"><button class="st" aria-label="隔离对象"><svg width="16" height="16"><path class="s" d="M.5.500h6v6h-6zM7 9l4 6.500H3z"/><circle class="s" cx="12" cy="6" r="3"/></svg></button></div>
    <div class="grp"><button class="st on" aria-label="图形性能"><svg width="16" height="16"><circle cx="8" cy="8" r="7.500" fill="#8593a8" stroke="#c0c8d4"/><path stroke="#4a6a94" stroke-width="2" d="m5 12 6-8"/></svg></button></div>
    <div class="grp"><button class="st" aria-label="全屏显示"><svg width="16" height="12"><path class="s" d="M.5.500h15v11H.5zM3 9l4-3M3 6v3h3M13 3 9 6M13 6V3h-3"/></svg></button><button class="st" aria-label="自定义"><svg width="16" height="14"><path class="f" d="M0 0h16v2H0zM0 6h16v2H0zM0 12h16v2H0z"/></svg></button></div>
  </div>
</footer>

<div class="watermark" aria-hidden="true">
  <svg width="44" height="42"><path fill="#1c80b8" d="M44 0C22 1 2 14 1 24c-1 6 3 10 6 11-3-9 4-18 14-24 8-5 15-8 23-11z"/><path fill="#2268a8" d="M12 28c0-8 14-12 14-4 0 5-7 7-9 3 3 1 6-1 5-3-2-3-8 0-10 4z"/><path fill="#35a049" d="M26 15c10-1 17 3 14 10-3 8-15 14-28 16 12-4 21-10 22-17 0-4-3-7-8-9z"/></svg>
  <div><strong>极光下载站</strong><span>www.xz7.com</span></div>
</div>
</div>
</body>
</html>
```
FILE: styles.css
```css
:root {
  --bg: #222831;
  --panel: #3b4453;
  --field: #4d596d;
  --line: #2b323e;
  --text: #e6e6e6;
  --muted: #b4b8be;
  --active: #5c8cc0;
}
* { box-sizing: border-box; }
body {
  margin: 0;
  background: #eef0f2;
  color: var(--text);
  font: 12px/16px "Open Sans", "Noto Sans CJK SC", sans-serif;
}
button, input, select {
  margin: 0; padding: 0; border: 0; background: none;
  color: inherit; font: inherit; white-space: nowrap;
}
svg { display: block; flex: none; }
p, h1, ul { margin: 0; padding: 0; font: inherit; list-style: none; }

.s { fill: none; stroke: #dcdcdc; }
.f { fill: #dcdcdc; }
.b { fill: none; stroke: #6cc0ff; }
.bf { fill: #6cc0ff; }

.app {
  position: relative;
  display: flex; flex-direction: column;
  min-height: 100vh;
  margin: 0 2px;
  border: 1px solid #0a93dc; border-bottom: 0;
  background: var(--bg);
}
.caret {
  display: block; flex: none; width: 6px; height: 3px;
  border: solid transparent; border-width: 3px 3px 0; border-top-color: #d4d6da;
}
.caret.mid, .caret.lg { width: 8px; height: 4px; border-width: 4px 4px 0; }
.caret.slot { margin: 0 3px; }
.caret.dim { border-top-color: #7c8188; }
.caret.dark { border-top-color: #555; }
.cell { display: flex; align-items: center; justify-content: center; width: 24px; height: 24px; flex: none; }
.cell.thin { width: 16px; }

/* title bar */
.titlebar { display: flex; height: 27px; align-items: center; padding-left: 3px; }
.quick, .account, .winbtns { display: flex; align-items: center; flex: none; }
.quick .gap { width: 14px; }
.share { display: flex; align-items: center; gap: 5px; padding-left: 4px; color: #8ccbff; }
.title { display: flex; flex: 1; justify-content: center; gap: 14px; font-size: 13px; line-height: 20px; padding-bottom: 2px; white-space: nowrap; }
.search { width: 178px; height: 20px; padding: 0 3px; background: #4a5264; font-style: italic; color: #ccc; }
.search::placeholder { color: #b5b9c0; opacity: 1; }
.login { display: flex; align-items: center; gap: 5px; width: 122px; padding-left: 4px; }
.login .caret { margin-left: auto; margin-right: 5px; }
.vline { width: 1px; height: 18px; margin: 0 6px; background: #505864; }
.winbtns { margin-left: 57px; padding-right: 5px; }

/* menus */
.menubar { display: flex; align-items: center; gap: 25px; height: 21px; padding: 2px 5px 0 16px; border-bottom: 1px solid var(--panel); color: var(--muted); }
.docbtns { display: flex; gap: 6px; margin-left: auto; }

.tabs { display: flex; align-items: flex-end; height: 24px; padding-left: 7px; color: var(--muted); }
.tabs button { height: 20px; padding: 0 10px; line-height: 20px; }
.tabs .on { background: var(--panel); color: #fff; padding: 0 9px; margin-right: 1px; }
.tabs .minribbon { display: flex; align-items: center; gap: 3px; margin-left: 16px; }

/* ribbon */
.ribbon { display: flex; height: 99px; margin: 0 4px; background: var(--panel); overflow: hidden; }
.panel { display: flex; flex-direction: column; flex: none; border-right: 1px solid var(--bg); }
.p-draw { width: 211px; } .p-modify { width: 227px; } .p-anno { width: 156px; }
.p-layer { width: 252px; } .p-block { width: 134px; } .p-prop { width: 244px; }
.p-group { width: 68px; } .p-util { width: 76px; } .p-clip { width: 76px; border: 0; }
.body { display: flex; flex: 1; padding: 6px 1px 0; }
.name { position: relative; display: flex; align-items: center; justify-content: center; gap: 8px; height: 20px; }
.launch { position: absolute; right: 4px; bottom: 6px; }
.big { display: flex; flex-direction: column; align-items: center; flex: none; width: 40px; height: 73px; padding-top: 1px; line-height: 17px; }
.big svg { margin-bottom: 4px; }
.big .caret { margin-top: 3px; }
.p-draw .body { padding-left: 2px; }
.w44 { width: 44px; }
.w48 { width: 48px; }
.col { display: flex; flex-direction: column; flex: none; padding-left: 6px; }
.p-modify .col { width: 59px; }
.p-modify .col.wide { width: 75px; }
.p-modify .col.last { width: auto; }
.p-modify .wide .caret { margin-left: 6px; }
.col.tight { padding-left: 2px; }
.col.pad4 { padding-left: 4px; }
.col.cells { padding-left: 0; }
.small { display: flex; align-items: center; gap: 5px; height: 24px; }
.small .caret { margin-left: 3px; }
.small.flush { padding-left: 4px; }
.stack { display: flex; flex-direction: column; flex: 1; }
.p-prop .stack { margin-top: -1px; }
.row { display: flex; height: 24px; align-items: center; }
.combo { display: flex; flex: 1; align-items: center; height: 22px; margin-right: 1px; padding: 0 2px 0 3px; background: var(--field); border: 1px solid var(--line); }
.p-layer .combo { flex: none; height: 23px; gap: 3px; margin: 0 1px 1px 0; }
.combo select { flex: 1; min-width: 0; appearance: none; height: 20px; }
.combo .c1 { padding-left: 8px; }
.swatch { width: 14px; height: 14px; margin: 0 3px; background: #fff; flex: none; }
.swatch.black { outline: 1px solid #000; width: 12px; height: 12px; }
.swatch.white { width: 16px; height: 16px; margin-left: 9px; border: 1px solid #aaa; }
.line { width: 64px; height: 1px; margin-right: 3px; background: #fff; }
.pico { margin: 0 2px; }
.wheel { border-radius: 50%; }
.boxed { border: 1px solid #6cc0ff; background: #46607c; height: 22px; }

/* drawing tabs */
.doctabs { display: flex; align-items: flex-end; height: 30px; margin: 0 3px 0 3px; padding-left: 14px; border-bottom: 4px solid var(--panel); }
.doctab {
  display: flex; align-items: center; justify-content: space-between;
  width: 142px; height: 22px; padding: 0 25px 0 17px;
  background: #2d3440; color: var(--muted); text-align: left;
  clip-path: path("M0 22C8 22 7 12 9 6Q11 0 18 0H122Q129 0 132 7C134 16 134 22 142 22Z");
}
.doctab.on { margin-left: -18px; background: var(--panel); color: #fff; font-weight: 700; }
.newtab { display: flex; align-items: center; justify-content: center; width: 22px; height: 14px; margin: 0 0 4px -5px; background: #2d3440; border-radius: 6px 10px 4px 10px; }

/* model space */
.canvas { position: relative; flex: 1; min-height: 600px; overflow: hidden; border-bottom: 1px solid #404750; }
.viewlabel { padding: 6px; color: #000; font-family: "Noto Sans CJK SC", sans-serif; }
.drawing { position: absolute; left: 3px; top: 0; }
.prompt { position: absolute; left: 708px; top: 281px; display: flex; gap: 3px; color: #000; align-items: flex-start; }
.promptlabel { display: flex; justify-content: space-between; width: 148px; height: 25px; padding: 2px 3px; background: #999; border: 1px solid #000; }
.promptlabel svg { align-self: flex-end; margin-bottom: 1px; }
.factorbox { width: 22px; height: 22px; padding: 1px 3px; background: #fff; border: 1px solid #000; }
.factorbox input { display: block; width: 7px; height: 17px; background: #0a78d8; color: #fff; }

.viewcube { position: absolute; right: 25px; top: 21px; color: #b5b5b5; font-size: 18px; line-height: 20px; }
.viewcube span { position: absolute; }
.viewcube .n { left: 52px; top: -4px; }
.viewcube .so { left: 52px; bottom: -7px; }
.viewcube .w { left: -5px; top: 52px; }
.viewcube .e { right: -4px; top: 52px; }
.face { position: absolute; left: 35px; top: 35px; display: grid; place-items: center; width: 52px; height: 52px; background: #adaeaf; border: 1px solid #747a7e; }
.viewcube .face span { position: static; width: 32px; height: 32px; background: #9da3a9; color: #535c68; font-size: 30px; line-height: 30px; font-weight: 300; }
.wcs { position: absolute; right: 62px; top: 169px; display: flex; align-items: center; justify-content: center; gap: 6px; width: 48px; height: 18px; border: 1px solid #7c7f8c; border-radius: 4px; background: #9496a5; color: #474b56; font: 11px "Liberation Sans", sans-serif; }

.navbar { position: absolute; right: 7px; top: 212px; display: flex; flex-direction: column; align-items: center; width: 32px; height: 212px; border-radius: 4px; background: #585d61; box-shadow: 0 0 0 2px #1b2026; }
.navbar .caret { margin: 6px 0; border-top-color: #42474d; }
.navbar hr { width: 26px; height: 1px; margin: 0 0 3px; border: 0; background: #666b6f; }
.nv { display: grid; place-items: center; min-height: 24px; }
.tiny { align-self: flex-end; margin: 1px 2px 10px; }
.tiny.end { margin: auto 2px 2px; }
.n1 { fill: none; stroke: #42474d; }

.ucs { position: absolute; left: 13px; bottom: 11px; }
.ucs text { fill: #fff; font: 300 18px "Open Sans", sans-serif; }

.command { position: absolute; left: 385px; right: 384px; bottom: 1px; }
.history { display: flex; flex-direction: column; align-items: flex-start; gap: 4px; padding: 0 0 2px 62px; color: #62666b; font: 12px/16px "Liberation Mono", "Noto Sans CJK SC", monospace; }
.history li { padding: 0 2px; background: #30353b; border-radius: 2px; }
.cmdbar { display: flex; height: 26px; }
.grip { display: flex; align-items: center; gap: 5px; width: 56px; padding-left: 3px; background: #2c313d; }
.grip button:last-child { margin-left: 7px; }
.cmdline { display: flex; flex: 1; align-items: center; padding: 0 4px; background: #bcbdbe; color: #111; border-radius: 2px; }
.cmdline .caret { margin: 0 0 0 3px; }
.cmdline p { flex: 1; font: 13px/18px "Noto Sans CJK SC", sans-serif; }
.cmdline code { font: 12px "Liberation Mono", monospace; white-space: pre; }
.cmdline mark { padding: 1px 0; border-radius: 3px; background: #9b9c9e; color: inherit; }
.cmdline b { color: #1a1ad0; }

/* bottom bar */
.bottom { display: flex; justify-content: space-between; height: 25px; padding: 0 3px 0 16px; }
.layouts { display: flex; height: 18px; gap: 3px; color: var(--muted); }
.layouts button { padding: 0 10px; line-height: 16px; background: #2d3440; clip-path: polygon(0 0, 100% 0, calc(100% - 2px) 40%, calc(100% - 8px) 100%, 8px 100%, 3px 60%); }
.layouts .on { background: var(--panel); color: #fff; font-weight: 700; }
.layouts .add { display: grid; place-items: center; width: 22px; margin-left: 3px; padding: 0; }
.status { display: flex; gap: 3px; padding-top: 1px; }
.grp { display: flex; align-items: center; background: var(--panel); }
.st { display: flex; align-items: center; justify-content: center; width: 24px; height: 23px; }
.st.on { background: var(--active); }
.dd { display: flex; align-items: center; justify-content: center; width: 16px; height: 23px; }
.coords { position: relative; width: 240px; padding-left: 24px; font-size: 11px; color: #c6cad0; }
.ime { position: absolute; left: 166px; top: -8px; width: 68px; height: 32px; padding: 3px 4px; background: #000; color: #222; font-size: 12px; }
.ime span { display: flex; align-items: center; justify-content: center; gap: 4px; height: 26px; background: #fff; border-radius: 6px; }
.scale { width: 54px; font-size: 11px; }
.units { width: 97px; padding-right: 4px; }
.units select { appearance: none; flex: 1; padding-left: 6px; color: #fff; font-weight: 500; }

.watermark { position: absolute; right: 3px; bottom: 8px; display: flex; opacity: .75; pointer-events: none; }
.watermark div { display: flex; flex-direction: column; }
.watermark strong { color: #1a62a0; font-size: 21px; line-height: 24px; font-weight: 700; }
.watermark span { color: #27704a; font: 700 17px/20px "Liberation Sans", sans-serif; }
```
